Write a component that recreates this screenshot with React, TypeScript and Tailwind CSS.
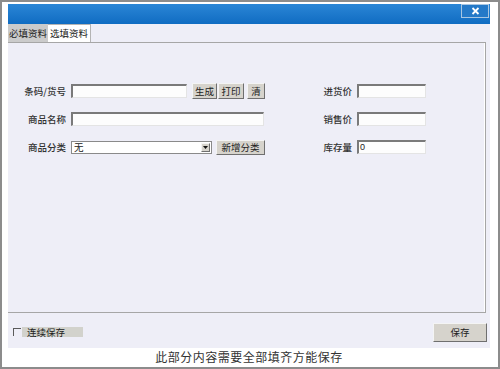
const cjk = "font-['Noto_Sans_CJK_SC',sans-serif]"

function Input({ w, value }: { w: string; value?: string }) {
  return (
    <div
      className={`${w} h-[14px] bg-[#fdfdfd] border-t-2 border-l-2 border-t-[#7a7a7a] border-l-[#7a7a7a] border-b border-r border-b-[#e4e4e4] border-r-[#e4e4e4] text-[9px] leading-[11px] pl-[1px] text-[#222] font-['Liberation_Sans',sans-serif]`}
    >
      {value}
    </div>
  )
}

function Btn({ w, h = 'h-[16px]', label, className = '' }: { w: string; h?: string; label: string; className?: string }) {
  return (
    <div
      className={`${w} ${h} ${className} bg-[#d6d3cc] border border-t-[#f4f4f4] border-l-[#f4f4f4] border-b-[#6f6f6f] border-r-[#6f6f6f] flex items-center justify-center text-[9.5px] text-[#222] ${cjk}`}
    >
      {label}
    </div>
  )
}

function Label({ w, text }: { w: string; text: string }) {
  return <div className={`${w} text-right text-[9.5px] font-medium text-[#333] ${cjk}`}>{text}</div>
}

export default function App() {
  return (
    <div className="w-[500px] h-[369px] bg-white border-2 border-[#8c8c8c] pl-[6px] pr-[8px] pt-[2px] flex flex-col">
      {/* dialog */}
      <div className="h-[344px] bg-[#eeeef7] flex flex-col">
        <div className="h-[20px] bg-gradient-to-b from-[#2a86d6] to-[#0f6cc2] flex justify-end">
          <div className="w-[28px] h-[14px] mr-[1px] border border-[#a8c6e2] bg-[#2479c8] flex items-center justify-center">
            <svg width="9" height="8" viewBox="0 0 9 8">
              <path d="M1.5 1 L7.5 7 M7.5 1 L1.5 7" stroke="#fff" strokeWidth="1.8" />
            </svg>
          </div>
        </div>

        <div className="h-[18px] flex items-end">
          <div className={`w-[40px] h-[18px] bg-[#cbcbcb] text-[9.5px] text-[#222] flex items-center justify-center ${cjk}`}>必填资料</div>
          <div className={`w-[43px] h-[18px] bg-white border-r border-t border-[#b4b4b4] text-[9.5px] text-[#222] flex items-center justify-center ${cjk}`}>选填资料</div>
        </div>

        {/* panel */}
        <div className="h-[271px] mr-[4px] border-t border-r border-b border-[#a6a6a6] shadow-[inset_-1px_0_0_#ffffff] pt-[40px] flex">
          <div className="flex flex-col gap-[12px]">
            <div className="flex items-center h-[16px]">
              <Label w="w-[58px]" text="条码/货号" />
              <div className="ml-[5px]"><Input w="w-[116px]" /></div>
              <Btn w="w-[25px]" label="生成" className="ml-[5px]" />
              <Btn w="w-[26px]" label="打印" className="ml-[1px]" />
              <Btn w="w-[18px]" label="清" className="ml-[3px]" />
            </div>
            <div className="flex items-center h-[16px]">
              <Label w="w-[58px]" text="商品名称" />
              <div className="ml-[5px]"><Input w="w-[193px]" /></div>
            </div>
            <div className="flex items-center h-[16px]">
              <Label w="w-[58px]" text="商品分类" />
              <div className="ml-[5px] w-[141px] h-[13px] bg-white border border-[#8a8a8a] flex items-center justify-between">
                <span className={`text-[9.5px] leading-[11px] pl-[2px] text-[#222] ${cjk}`}>无</span>
                <div className="w-[9px] h-[9px] mr-[1px] bg-[#d6d3cc] border border-t-[#f4f4f4] border-l-[#f4f4f4] border-b-[#6f6f6f] border-r-[#6f6f6f] flex items-center justify-center">
                  <svg width="5" height="3" viewBox="0 0 5 3">
                    <path d="M0 0 H5 L2.5 3 Z" fill="#111" />
                  </svg>
                </div>
              </div>
              <Btn w="w-[49px]" h="h-[15px]" label="新增分类" className="ml-[4px]" />
            </div>
          </div>

          <div className="ml-[35px] flex flex-col gap-[12px]">
            <div className="flex items-center h-[16px]">
              <Label w="w-[52px]" text="进货价" />
              <div className="ml-[5px]"><Input w="w-[69px]" /></div>
            </div>
            <div className="flex items-center h-[16px]">
              <Label w="w-[52px]" text="销售价" />
              <div className="ml-[5px]"><Input w="w-[69px]" /></div>
            </div>
            <div className="flex items-center h-[16px]">
              <Label w="w-[52px]" text="库存量" />
              <div className="ml-[5px]"><Input w="w-[69px]" value="0" /></div>
            </div>
          </div>
        </div>

        {/* bottom bar */}
        <div className="flex-1 flex items-center justify-between pl-[5px] pr-[3px] pt-[2px]">
          <div className="flex items-center">
            <div className="w-[8px] h-[8px] border-t border-l border-[#5a5a5a] mr-[1px]" />
            <div className={`w-[61px] h-[10px] bg-[#d2d2cc] text-[9.5px] leading-[10px] pl-[5px] text-[#222] ${cjk}`}>连续保存</div>
          </div>
          <Btn w="w-[54px]" h="h-[19px]" label="保存" className="mt-[2px]" />
        </div>
      </div>

      {/* footer */}
      <div className="flex-1 flex items-center justify-center">
        <span className="text-[12px] text-[#333] tracking-[0.5px] font-['Liberation_Serif','Noto_Sans_CJK_SC',serif]">
          此部分内容需要全部填齐方能保存
        </span>
      </div>
    </div>
  )
}
